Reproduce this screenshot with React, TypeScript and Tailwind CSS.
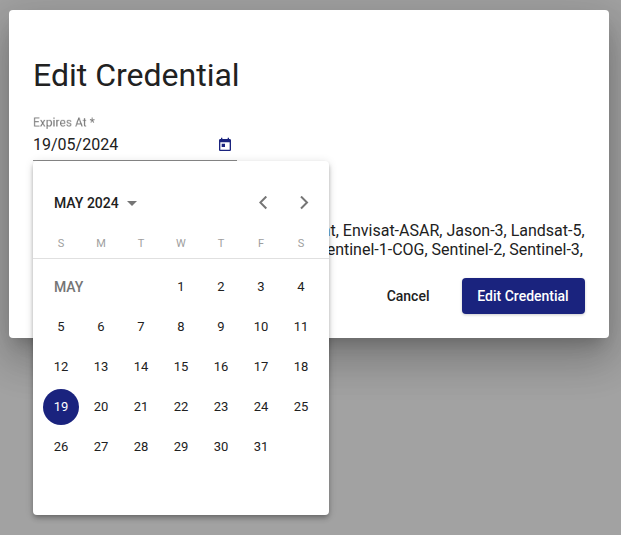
const weekdays = ['S', 'M', 'T', 'W', 'T', 'F', 'S'];
const days = Array.from({ length: 31 }, (_, i) => i + 1);

function Calendar() {
  return (
    <div className="absolute left-6 top-[151px] h-[354px] w-[296px] rounded bg-white shadow-[0_2px_4px_-1px_rgba(0,0,0,0.2),0_4px_5px_0_rgba(0,0,0,0.14),0_1px_10px_0_rgba(0,0,0,0.12)]">
      <div className="flex h-[66px] items-end pl-[21px] pr-[5px]">
        <button className="flex h-12 items-center text-[14px] font-medium">
          <span>MAY 2024</span>
          <svg className="ml-2 mt-px h-[5px] w-[10px]" viewBox="0 0 10 5" fill="#757575"><path d="M0 0h10L5 5z" /></svg>
        </button>
        <div className="ml-auto flex">
          <button className="flex h-12 w-10 items-center justify-center" aria-label="Previous month">
            <svg className="h-[14px] w-[10px]" viewBox="0 0 10 14" fill="none" stroke="#757575" strokeWidth="2"><path d="M7.3.5 1.3 6.5l6 6" /></svg>
          </button>
          <button className="flex h-12 w-10 items-center justify-center" aria-label="Next month">
            <svg className="h-[14px] w-[10px]" viewBox="0 0 10 14" fill="none" stroke="#757575" strokeWidth="2"><path d="m2 .5 6 6-6 6" /></svg>
          </button>
        </div>
      </div>
      <div className="grid h-8 grid-cols-7 border-b border-[#e0e0e0] px-2 text-center text-[11px] leading-[33px] text-[#9e9e9e]">
        {weekdays.map((d, i) => <span key={i}>{d}</span>)}
      </div>
      <div className="mt-2 grid grid-cols-7 px-2 text-[13px]">
        <div className="col-span-3 flex h-10 items-center pl-[13px] text-[14px] font-medium text-[#757575]">MAY</div>
        {days.map((d) => (
          <div key={d} className="flex h-10 items-center justify-center">
            <span className={d === 19 ? 'flex h-9 w-9 items-center justify-center rounded-full bg-[#1a237e] text-white' : 'flex h-9 w-9 items-center justify-center'}>{d}</span>
          </div>
        ))}
      </div>
    </div>
  );
}

export default function App() {
  return (
    <div className="h-[535px] w-[621px] overflow-hidden bg-[#a2a2a2] pl-[9px] pt-[10px] font-['Roboto',sans-serif] text-[#212121]">
      <div className="relative h-[328px] w-[600px] rounded bg-white px-6 pt-[46px] shadow-[0_11px_15px_-7px_rgba(0,0,0,0.2),0_24px_38px_3px_rgba(0,0,0,0.14),0_9px_46px_8px_rgba(0,0,0,0.12)]">
        <h1 className="h-[60px] text-[32px] leading-[38px]">Edit Credential</h1>
        <div className="h-[45px] w-[204px] border-b border-[#8c8c8c]">
          <label className="block h-[15px] origin-top-left scale-75 text-[16px] leading-[17px] text-[#757575] will-change-transform">Expires At *</label>
          <div className="flex items-center justify-between pr-1 text-[16px] leading-[28px]">
            <span>19/05/2024</span>
            <svg className="h-4 w-4" viewBox="0 0 24 24" fill="#1a237e"><path d="M19 3h-1V1h-2v2H8V1H6v2H5c-1.11 0-1.99.9-1.99 2L3 19c0 1.1.89 2 2 2h14c1.1 0 2-.9 2-2V5c0-1.1-.9-2-2-2zm0 16H5V8h14v11zM7 10h5v5H7z" /></svg>
          </div>
        </div>
        <div className="mt-[60px] text-right text-[16px] leading-[19px]">
          <div className="pr-[0.4px]">at, Envisat-ASAR, Jason-3, Landsat-5,</div>
          <div className="pr-[2px]">entinel-1-COG, Sentinel-2, Sentinel-3,</div>
        </div>
        <div className="mt-[19px] flex justify-end gap-[16.5px] text-[14px] font-medium">
          <button className="h-9 px-4">Cancel</button>
          <button className="h-9 w-[123px] rounded bg-[#1a237e] pr-px text-white shadow-[0_1px_3px_rgba(0,0,0,0.2)]">Edit Credential</button>
        </div>
        <Calendar />
      </div>
    </div>
  );
}
